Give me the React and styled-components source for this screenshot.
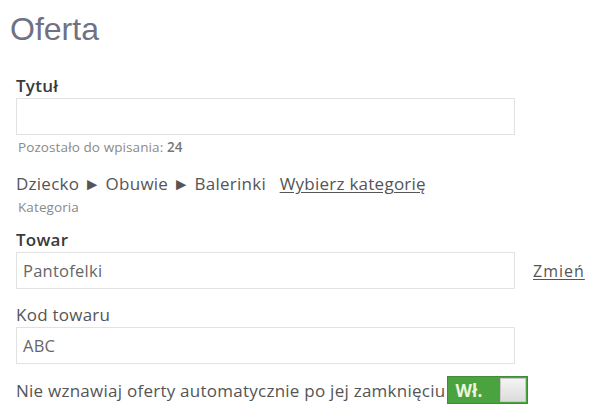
import React from "react";
import styled, { createGlobalStyle } from "styled-components";

const GlobalStyle = createGlobalStyle`
  body {
    margin: 0;
    background: #fff;
    font-family: "Open Sans", "Liberation Sans", sans-serif;
    color: #555;
  }
`;

export const Page = styled.div`
  width: 600px;
  height: 416px;
  padding: 9px 0 0 10px;
  box-sizing: border-box;
  overflow: hidden;
`;

export const Title = styled.h1`
  margin: 0 0 26px;
  font-family: "Liberation Sans", Arial, sans-serif;
  font-size: 32px;
  font-weight: 400;
  line-height: 40px;
  color: #6f7184;
`;

export const Form = styled.div`
  padding-left: 6px;
  display: flex;
  flex-direction: column;
  letter-spacing: 0.25px;
`;

export const Field = styled.div`
  display: flex;
  flex-direction: column;
  margin-bottom: ${({ $gap }) => $gap || 0}px;
`;

export const Label = styled.label`
  font-size: 17px;
  line-height: 22px;
  font-weight: ${({ $bold }) => ($bold ? 600 : 400)};
  color: ${({ $bold }) => ($bold ? "#3a3a3a" : "#555")};
  margin-bottom: 1px;
`;

export const Row = styled.div`
  display: flex;
  align-items: center;
  gap: 18px;
`;

export const Input = styled.div`
  width: 499px;
  height: 37px;
  box-sizing: border-box;
  border: 1px solid #e2e2e2;
  padding: 0 6px;
  display: flex;
  align-items: center;
  font-size: 16.5px;
  color: #666;
`;

export const Hint = styled.div`
  font-size: 13.5px;
  line-height: 18px;
  letter-spacing: 0.1px;
  color: #8a8a8a;
  margin-top: ${({ $top }) => $top || 0}px;
  padding-left: 2px;
  b {
    font-weight: 600;
    color: #777;
  }
`;

export const Crumbs = styled.div`
  font-size: 17px;
  line-height: 24px;
  color: #555;
`;

export const Link = styled.a`
  color: #555;
  text-decoration: underline;
  text-underline-offset: 2px;
  margin-left: ${({ $ml }) => $ml || 0}px;
  letter-spacing: ${({ $ls }) => $ls || 0.25}px;
  cursor: pointer;
`;

export const ToggleRow = styled.div`
  display: flex;
  align-items: center;
  gap: 2px;
  font-size: 17px;
  color: #555;
  white-space: nowrap;
`;

export const Toggle = styled.div`
  width: 81px;
  height: 28px;
  flex: none;
  box-sizing: border-box;
  border: 1px solid #3f8e35;
  background: #4aa33e;
  display: flex;
  align-items: stretch;
  letter-spacing: 0.3px;
`;

export const ToggleText = styled.span`
  flex: 1;
  display: flex;
  align-items: center;
  padding-left: 7px;
  color: #eef3de;
  font-weight: 700;
  font-size: 17px;
`;

export const Knob = styled.span`
  width: 26px;
  margin: 1px;
  background: linear-gradient(#f4f4f4, #dcdcdc);
  border: 1px solid #c9c9c9;
  box-sizing: border-box;
`;

const App = () => {
  return (
    <Page>
      <GlobalStyle />
      <Title>Oferta</Title>
      <Form>
        <Field $gap={16}>
          <Label $bold>Tytuł</Label>
          <Input />
          <Hint $top={3}>
            Pozostało do wpisania: <b>24</b>
          </Hint>
        </Field>
        <Field $gap={13}>
          <Crumbs>
            Dziecko ► Obuwie ► Balerinki <Link $ml={9}>Wybierz kategorię</Link>
          </Crumbs>
          <Hint $top={2}>Kategoria</Hint>
        </Field>
        <Field $gap={15}>
          <Label $bold>Towar</Label>
          <Row>
            <Input>Pantofelki</Input>
            <Link $ls={1}>Zmień</Link>
          </Row>
        </Field>
        <Field $gap={12}>
          <Label>Kod towaru</Label>
          <Input>ABC</Input>
        </Field>
        <ToggleRow>
          Nie wznawiaj oferty automatycznie po jej zamknięciu
          <Toggle>
            <ToggleText>Wł.</ToggleText>
            <Knob />
          </Toggle>
        </ToggleRow>
      </Form>
    </Page>
  );
};

export default App;
